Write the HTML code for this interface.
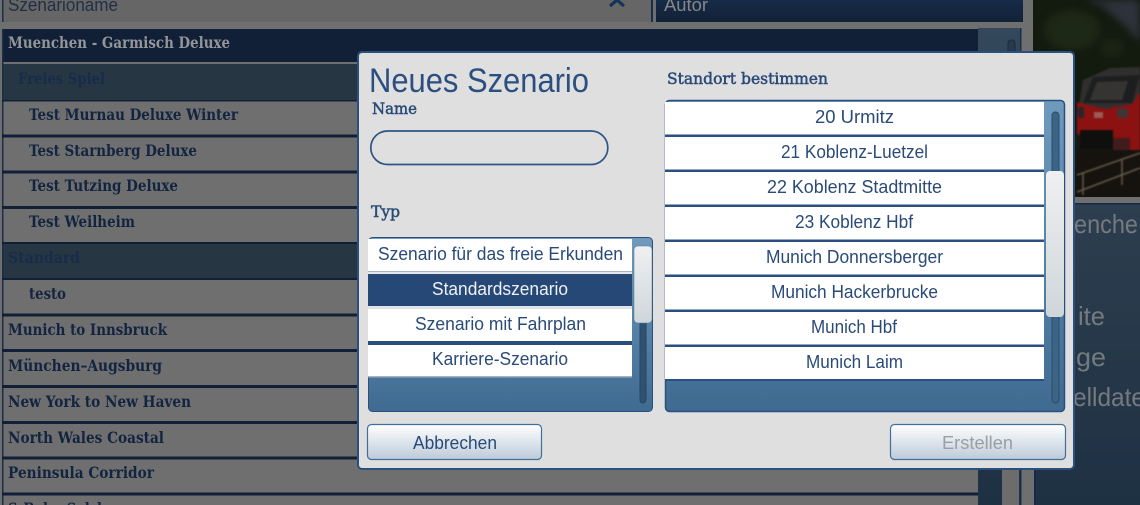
<!DOCTYPE html>
<html><head><meta charset="utf-8"><style>
html,body{margin:0;padding:0;width:1140px;height:505px;overflow:hidden;background:#707070}
svg{display:block}
.s{font-family:"DejaVu Serif","Liberation Serif",serif;font-size:16px;font-weight:bold;fill:#162a4a}
.d{font-family:"DejaVu Serif","Liberation Serif",serif;font-size:16px;fill:#2a4a78;stroke:#2a4a78;stroke-width:.5px}
.n{font-family:"Liberation Sans",sans-serif;font-size:18px;fill:#2a4a78}
.b{font-family:"Liberation Sans",sans-serif;font-size:18px;fill:#24374f}
.g{font-family:"Liberation Sans",sans-serif;font-size:26px;fill:#868b90}
</style></head><body>
<svg width="1140" height="505" viewBox="0 0 1140 505" xmlns="http://www.w3.org/2000/svg">
<defs>
<linearGradient id="btn" x1="0" y1="0" x2="0" y2="1"><stop offset="0" stop-color="#ffffff"/><stop offset="1" stop-color="#bccbd9"/></linearGradient>
<linearGradient id="thumb" x1="0" y1="0" x2="0" y2="1"><stop offset="0" stop-color="#eff0f1"/><stop offset="1" stop-color="#cfd6da"/></linearGradient>
<linearGradient id="panel" x1="0" y1="0" x2="0" y2="1"><stop offset="0" stop-color="#6f9abd"/><stop offset="1" stop-color="#3f6b92"/></linearGradient>
<linearGradient id="dk" x1="0" y1="0" x2="0" y2="1"><stop offset="0" stop-color="#1a3253"/><stop offset="1" stop-color="#14263f"/></linearGradient>
<linearGradient id="side" x1="0" y1="0" x2="0" y2="1"><stop offset="0" stop-color="#33475a"/><stop offset="1" stop-color="#23384d"/></linearGradient>
<linearGradient id="sb" x1="0" y1="0" x2="0" y2="1"><stop offset="0" stop-color="#3b5468"/><stop offset="1" stop-color="#23384d"/></linearGradient>
<filter id="bl" color-interpolation-filters="sRGB"><feGaussianBlur stdDeviation="0.9"/></filter>
<filter id="bl2" color-interpolation-filters="sRGB"><feGaussianBlur stdDeviation="4"/></filter>
<clipPath id="ph"><rect x="1033" y="0" width="107" height="197"/></clipPath>
</defs>

<rect width="1140" height="505" fill="#7f7f7f"/>
<!-- top fields -->
<rect x="2" y="0" width="650" height="22" fill="#757575"/>
<rect x="2" y="0" width="1.5" height="22" fill="#1c3555"/>
<rect x="651" y="0" width="2" height="22" fill="#1c3555"/>
<rect x="656" y="0" width="367" height="22" fill="url(#dk)"/>
<path d="M610 6 L617 0 L624 6" fill="none" stroke="#1c3a63" stroke-width="3.2"/>
<text class="b" x="8" y="11" textLength="110" lengthAdjust="spacingAndGlyphs">Szenarioname</text>
<text class="b" x="664" y="11" textLength="44" lengthAdjust="spacingAndGlyphs" style="fill:#9a9a9a">Autor</text>

<!-- list -->
<rect x="2" y="29" width="976" height="476" fill="#7f7f7f"/>
<rect x="2" y="29" width="976" height="33" fill="#14253f"/>
<rect x="2" y="64" width="976" height="36" fill="#2c3e4d"/>
<rect x="2" y="243" width="976" height="36" fill="#2c3e4d"/>
<rect x="2" y="29" width="1.5" height="476" fill="#1c3555"/>
<g fill="#14253f">
<rect x="2" y="100" width="976" height="1.5"/><rect x="2" y="134.500" width="976" height="3"/>
<rect x="2" y="170.500" width="976" height="3"/><rect x="2" y="206" width="976" height="3"/>
<rect x="2" y="242" width="976" height="2"/><rect x="2" y="278" width="976" height="2"/>
<rect x="2" y="313.500" width="976" height="3"/><rect x="2" y="349" width="976" height="3"/>
<rect x="2" y="385" width="976" height="3"/><rect x="2" y="421" width="976" height="3"/>
<rect x="2" y="456.500" width="976" height="3"/><rect x="2" y="492.500" width="976" height="3"/>
</g>
<text class="s" style="fill:#a8aaae" x="8" y="48" textLength="222" lengthAdjust="spacingAndGlyphs">Muenchen - Garmisch Deluxe</text>
<text class="s" style="fill:#1c3355" x="18" y="84" textLength="87" lengthAdjust="spacingAndGlyphs">Freies Spiel</text>
<text class="s" x="29" y="120" textLength="209" lengthAdjust="spacingAndGlyphs">Test Murnau Deluxe Winter</text>
<text class="s" x="29" y="156" textLength="168" lengthAdjust="spacingAndGlyphs">Test Starnberg Deluxe</text>
<text class="s" x="29" y="191" textLength="149" lengthAdjust="spacingAndGlyphs">Test Tutzing Deluxe</text>
<text class="s" x="29" y="227" textLength="106" lengthAdjust="spacingAndGlyphs">Test Weilheim</text>
<text class="s" style="fill:#1c3355" x="8" y="263" textLength="72" lengthAdjust="spacingAndGlyphs">Standard</text>
<text class="s" x="29" y="299" textLength="37" lengthAdjust="spacingAndGlyphs">testo</text>
<text class="s" x="8" y="335" textLength="159" lengthAdjust="spacingAndGlyphs">Munich to Innsbruck</text>
<text class="s" x="8" y="371" textLength="154" lengthAdjust="spacingAndGlyphs">München–Augsburg</text>
<text class="s" x="8" y="407" textLength="183" lengthAdjust="spacingAndGlyphs">New York to New Haven</text>
<text class="s" x="8" y="443" textLength="156" lengthAdjust="spacingAndGlyphs">North Wales Coastal</text>
<text class="s" x="8" y="478" textLength="146" lengthAdjust="spacingAndGlyphs">Peninsula Corridor</text>
<text class="s" x="8" y="514" textLength="124" lengthAdjust="spacingAndGlyphs">S-Bahn Salzburg</text>

<!-- list scrollbar -->
<path d="M978 28 H1018 Q1021 28 1021 31 V505 H978 Z" fill="url(#sb)"/>
<rect x="1008" y="40" width="7" height="20" rx="3" fill="#2d4256" stroke="#1c3045"/>
<rect x="1002" y="470" width="17" height="35" fill="#7b7b7b"/>
<rect x="1020" y="28" width="1.5" height="477" fill="#1c3555"/>

<!-- photo -->
<g clip-path="url(#ph)">
<rect x="1033" y="0" width="107" height="197" fill="#161e11"/>
<polygon points="1082,0 1140,0 1140,42 1125,26 1102,6" fill="#343a44" filter="url(#bl2)"/>
<ellipse cx="1072" cy="30" rx="28" ry="20" fill="#232e1a" filter="url(#bl2)"/>
<ellipse cx="1112" cy="48" rx="12" ry="9" fill="#1f2a18" filter="url(#bl2)"/>
<g filter="url(#bl)">
<rect x="1076" y="150" width="64" height="47" fill="#1a1612"/>
<polygon points="1077,118 1083,80 1110,68 1140,67 1140,110 1082,110" fill="#383634"/>
<polygon points="1083,103 1093,77 1140,75 1132,103" fill="#222325"/>
<polygon points="1090,100 1097,82 1128,81 1122,100" fill="#3e3c38"/>
<polygon points="1077,102 1084,104 1105,109 1132,104 1140,92 1140,150 1122,150 1077,134" fill="#a01414"/>
<rect x="1078" y="107" width="6" height="11" rx="2" fill="#2c2c2e"/>
<rect x="1117" y="108" width="11" height="10" rx="3" fill="#4a3c3c"/>
<rect x="1094" y="112" width="9" height="6" fill="#b06860"/>
<rect x="1080" y="130" width="33" height="19" fill="#121210"/>
<rect x="1113" y="138" width="17" height="12" fill="#4a2020"/>
<path d="M1077 175 L1140 153 M1077 192 L1140 168" stroke="#6e6552" stroke-width="1.500" fill="none"/>
<path d="M1083 173 V195 M1122 160 V185" stroke="#6e6552" stroke-width="1.500" fill="none"/>
</g>
</g>
<!-- right panel -->
<rect x="1033" y="197" width="107" height="7" fill="#7f7f7f"/>
<rect x="1035" y="203" width="105" height="302" fill="url(#side)"/>
<rect x="1035" y="203" width="105" height="1.500" fill="#1a3050"/>
<rect x="1034" y="203" width="2" height="302" fill="#1a3050"/>
<text class="g" x="1074" y="233" textLength="64" lengthAdjust="spacingAndGlyphs">enche</text>
<text class="g" x="1078" y="325" textLength="27" lengthAdjust="spacingAndGlyphs">ite</text>
<text class="g" x="1076" y="366" textLength="30" lengthAdjust="spacingAndGlyphs">ge</text>
<text class="g" x="1073" y="406" textLength="72" lengthAdjust="spacingAndGlyphs">elldate</text>

<!-- dim over background -->
<rect width="1140" height="505" fill="#000" opacity=".12"/>

<!-- dialog -->
<rect x="358" y="52" width="716" height="417" rx="4" fill="#dfdfdf" stroke="#2a5080" stroke-width="2"/>
<text x="369" y="92" font-family="Liberation Sans,sans-serif" font-size="34" fill="#2a4f80" textLength="220" lengthAdjust="spacingAndGlyphs">Neues Szenario</text>
<text class="d" x="372" y="114" textLength="45" lengthAdjust="spacingAndGlyphs">Name</text>
<rect x="370.800" y="131" width="237" height="33.500" rx="16.700" fill="#dfdfdf" stroke="#2d5585" stroke-width="1.700"/>
<text class="d" x="371" y="217" textLength="29" lengthAdjust="spacingAndGlyphs">Typ</text>
<text class="d" x="667" y="84" textLength="161" lengthAdjust="spacingAndGlyphs">Standort bestimmen</text>

<!-- left listbox -->
<rect x="368.500" y="237.500" width="284" height="174" rx="4" fill="url(#panel)" stroke="#2a5080"/>
<rect x="368" y="239" width="264" height="32" fill="#fff"/>
<rect x="368" y="271" width="264" height="3" fill="#e4e6ea"/>
<rect x="368" y="271" width="264" height="1" fill="#a8b2c4"/>
<rect x="368" y="274" width="264" height="32" fill="#264877"/>
<rect x="368" y="306" width="264" height="3" fill="#dfe3e8"/>
<rect x="368" y="309" width="264" height="32" fill="#fff"/>
<rect x="368" y="341" width="264" height="4" fill="#2a4d7e"/>
<rect x="368" y="345" width="264" height="31" fill="#fff"/>
<rect x="368" y="376" width="264" height="1.500" fill="#a8b2c4"/>
<rect x="640" y="320" width="6" height="83" rx="3" fill="#2f5272" stroke="#27445f"/>
<rect x="634" y="246" width="18" height="77" rx="4" fill="url(#thumb)" stroke="#5c7a96" stroke-width=".5"/>
<text class="n" x="378" y="260" textLength="245" lengthAdjust="spacingAndGlyphs">Szenario für das freie Erkunden</text>
<text class="n" x="432" y="295" textLength="136" lengthAdjust="spacingAndGlyphs" style="fill:#eef1f5">Standardszenario</text>
<text class="n" x="415" y="330" textLength="171" lengthAdjust="spacingAndGlyphs">Szenario mit Fahrplan</text>
<text class="n" x="432" y="365" textLength="136" lengthAdjust="spacingAndGlyphs">Karriere-Szenario</text>

<!-- right listbox -->
<rect x="665.500" y="100.500" width="399" height="311" rx="4" fill="url(#panel)" stroke="#2a5080" stroke-width="1.500"/>
<rect x="665" y="102" width="379" height="278" fill="#fff"/>
<g fill="#2a4f80">
<rect x="665" y="134.500" width="379" height="2.500"/><rect x="665" y="169.500" width="379" height="2.500"/>
<rect x="665" y="204.500" width="379" height="2.500"/><rect x="665" y="239.500" width="379" height="2.500"/>
<rect x="665" y="274.500" width="379" height="2.500"/><rect x="665" y="309.500" width="379" height="2.500"/>
<rect x="665" y="344.500" width="379" height="2.500"/><rect x="665" y="379" width="379" height="2"/>
</g>
<rect x="1052" y="112" width="7" height="291" rx="3.500" fill="#3d6484" stroke="#2b4c6a"/>
<rect x="1046" y="171" width="18" height="146" rx="4" fill="url(#thumb)"/>
<text class="n" x="815" y="123" textLength="79" lengthAdjust="spacingAndGlyphs">20 Urmitz</text>
<text class="n" x="781" y="158" textLength="147" lengthAdjust="spacingAndGlyphs">21 Koblenz-Luetzel</text>
<text class="n" x="767" y="193" textLength="175" lengthAdjust="spacingAndGlyphs">22 Koblenz Stadtmitte</text>
<text class="n" x="795" y="228" textLength="118" lengthAdjust="spacingAndGlyphs">23 Koblenz Hbf</text>
<text class="n" x="766" y="263" textLength="177" lengthAdjust="spacingAndGlyphs">Munich Donnersberger</text>
<text class="n" x="771" y="298" textLength="167" lengthAdjust="spacingAndGlyphs">Munich Hackerbrucke</text>
<text class="n" x="811" y="333" textLength="86" lengthAdjust="spacingAndGlyphs">Munich Hbf</text>
<text class="n" x="806" y="368" textLength="97" lengthAdjust="spacingAndGlyphs">Munich Laim</text>

<!-- buttons -->
<rect x="367.500" y="424.500" width="174" height="35" rx="4" fill="url(#btn)" stroke="#3f6f9a" stroke-width="1.200"/>
<text class="n" x="413" y="449" textLength="84" lengthAdjust="spacingAndGlyphs">Abbrechen</text>
<rect x="890.500" y="424.500" width="175" height="35" rx="4" fill="url(#btn)" stroke="#3f6f9a" stroke-width="1.200"/>
<text class="n" x="942" y="449" textLength="71" lengthAdjust="spacingAndGlyphs" style="fill:#9a9fa3">Erstellen</text>
</svg>
</body></html>
